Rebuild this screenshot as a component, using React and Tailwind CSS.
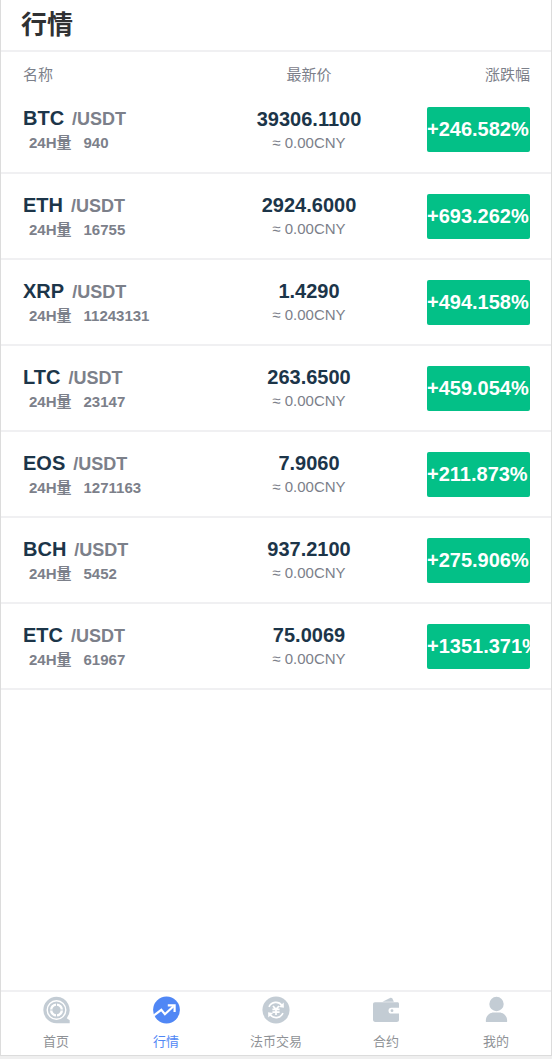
import clsx from "clsx";

const markets = [
  { coin: "BTC", volume: "940", price: "39306.1100", change: "+246.582%" },
  { coin: "ETH", volume: "16755", price: "2924.6000", change: "+693.262%" },
  { coin: "XRP", volume: "11243131", price: "1.4290", change: "+494.158%" },
  { coin: "LTC", volume: "23147", price: "263.6500", change: "+459.054%" },
  { coin: "EOS", volume: "1271163", price: "7.9060", change: "+211.873%" },
  { coin: "BCH", volume: "5452", price: "937.2100", change: "+275.906%" },
  { coin: "ETC", volume: "61967", price: "75.0069", change: "+1351.371%" },
];

const HomeIcon = () => (
  <svg viewBox="0 0 28 28" className="size-7" aria-hidden="true">
    <path
      d="M14.500.8a13.200 13.200 0 1 0 0 26.400h13.200v-3l-3-2A13.200 13.200 0 0 0 14.500.8Z"
      fill="#c3ccd4"
    />
    <g fill="none" stroke="#fff">
      <circle cx="14.5" cy="14" r="9.3" strokeWidth="1.4" />
      <circle cx="14.5" cy="14" r="5.4" strokeWidth="2.4" />
    </g>
    <path
      d="M14.500 7v3M14.500 18v3M7.500 14h3M18.500 14h3"
      stroke="#c3ccd4"
      strokeWidth="1"
    />
    <path d="m14.5 10.2 3.8 3.8-3.8 3.8-3.8-3.8Z" fill="#c3ccd4" />
  </svg>
);

const MarketIcon = () => (
  <svg viewBox="0 0 28 28" className="size-7" aria-hidden="true">
    <circle cx="14.5" cy="14" r="13.4" fill="#5087f5" />
    <path
      d="m2 19.3 7.3-5.5 3.600 4.400 8.600-8"
      fill="none"
      stroke="#fff"
      strokeWidth="2.2"
    />
    <path
      d="M15.8 9.300h6.800v6.600"
      fill="none"
      stroke="#fff"
      strokeWidth="2.2"
    />
  </svg>
);

const FiatIcon = () => (
  <svg viewBox="0 0 28 28" className="size-7" aria-hidden="true">
    <circle cx="14" cy="14" r="13.6" fill="#c3ccd4" />
    <g fill="none" stroke="#fff" strokeWidth="1.7">
      <path d="M7 10.8a7.6 7.6 0 0 1 13-1.3M21 17.2a7.6 7.6 0 0 1-13 1.3" />
      <path d="m11 10 3 3.4 3-3.4M14 13v6M10.4 13.4h7.2M10.4 16.2h7.2" />
    </g>
    <path d="m21.7 6.6.2 5.2-5-.7ZM6.3 21.4l-.2-5.2 5 .7Z" fill="#fff" />
  </svg>
);

const WalletIcon = () => (
  <svg viewBox="0 0 28 28" className="size-7" aria-hidden="true">
    <path d="M10.5 5.8 18 1.9c1-.5 1.8-.2 2.3.7l1.6 3.2Z" fill="#c3ccd4" />
    <path
      d="M3 6.2h22.4c1 0 1.6.6 1.6 1.6v16c0 1.6-.9 2.2-2.4 2.2H3.3C1.8 26 1 25.2 1 23.6V8.2c0-1.3.7-2 2-2Z"
      fill="#c3ccd4"
    />
    <path d="M19.4 11.8H27v5.8h-7.6a2.9 2.9 0 0 1 0-5.8Z" fill="#fff" />
    <circle cx="20" cy="14.7" r="1.4" fill="#c3ccd4" />
  </svg>
);

const UserIcon = () => (
  <svg viewBox="0 0 28 28" className="size-7" aria-hidden="true">
    <circle cx="14.5" cy="8" r="7.2" fill="#c3ccd4" />
    <path
      d="M3.8 25.2c0-5.5 3.7-8.8 8-8.8h5.4c4.3 0 8 3.3 8 8.8 0 .5-.4.9-.9.9H4.7a.9.9 0 0 1-.9-.9Z"
      fill="#c3ccd4"
    />
  </svg>
);

const tabs = [
  { label: "首页", Icon: HomeIcon },
  { label: "行情", Icon: MarketIcon, active: true },
  { label: "法币交易", Icon: FiatIcon },
  { label: "合约", Icon: WalletIcon },
  { label: "我的", Icon: UserIcon },
];

const MarketRow = ({ coin, volume, price, change }) => (
  <tr className="h-[86px] border-b-2 border-[#f0f0f2]">
    <td className="pt-0.5 pl-[22px] font-bold text-[#7c808a]">
      <p className="text-lg leading-6">
        <span className="mr-2 text-xl leading-6 text-[#1c3549]">{coin}</span>
        /USDT
      </p>
      <p className="pl-1.5 text-[15px] leading-6">
        24H量<span className="ml-3">{volume}</span>
      </p>
    </td>
    <td className="pt-0.5 text-center">
      <p className="text-xl leading-6 font-bold text-[#1c3549]">{price}</p>
      <p className="text-[15px] leading-6 text-[#7c808a]">≈ 0.00CNY</p>
    </td>
    <td className="pr-[21px]">
      <div className="ml-auto h-[45px] w-[103px] overflow-hidden rounded-xs bg-[#03c087] text-xl leading-[45px] font-bold whitespace-nowrap text-white">
        {change}
      </div>
    </td>
  </tr>
);

const App = () => {
  return (
    <div className="flex min-h-screen flex-col bg-[#efefef] pb-[3px] font-['Liberation_Sans','Noto_Sans_CJK_SC',sans-serif]">
      <div className="flex grow flex-col border-x border-b border-[#dcdcdc] bg-white">
        <header className="border-b-2 border-[#f0f0f2] px-5">
          <h1 className="text-[26px] leading-[50px] font-bold text-[#303133]">
            行情
          </h1>
        </header>

        <main className="grow">
          <table className="w-full table-fixed border-collapse">
            <thead className="text-[15px] leading-[22px] text-[#7c808a]">
              <tr>
                <th className="w-[41%] pt-3 pb-px pl-[22px] text-left font-normal">
                  名称
                </th>
                <th className="w-[30%] pt-3 pb-px font-normal">最新价</th>
                <th className="w-[29%] pt-3 pr-[21px] pb-px text-right font-normal">
                  涨跌幅
                </th>
              </tr>
            </thead>
            <tbody>
              {markets.map((item) => (
                <MarketRow key={item.coin} {...item} />
              ))}
            </tbody>
          </table>
        </main>

        <nav className="grid grid-cols-5 border-t-2 border-[#f0f0f2]">
          {tabs.map(({ label, Icon, active }) => (
            <a
              key={label}
              href="#"
              className={clsx(
                "flex flex-col items-center gap-2 pt-1 pb-[3px] text-[13px] leading-5",
                active ? "text-[#5087f5]" : "text-[#8f9296]"
              )}
            >
              <Icon />
              {label}
            </a>
          ))}
        </nav>
      </div>
    </div>
  );
};

export default App;
